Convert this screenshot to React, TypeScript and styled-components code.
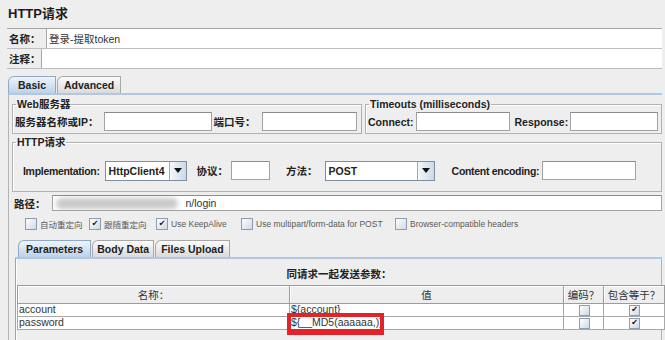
import React from 'react'
import styled, { createGlobalStyle } from 'styled-components'

const FONT = `'Liberation Sans', 'Noto Sans CJK SC', sans-serif`

const GlobalStyle = createGlobalStyle`
  body {
    margin: 0;
    background: #eeeeee;
    font-family: ${FONT};
    color: #222;
  }
`

const Page = styled.div`
  width: 665px;
  height: 340px;
  overflow: hidden;
  box-sizing: border-box;
  padding: 3px 0 0 7px;
`

const Frame = styled.div`
  width: 655px;
  display: flex;
  flex-direction: column;
`

const Title = styled.div`
  height: 22px;
  line-height: 22px;
  padding-left: 1px;
  font-size: 13px;
  font-weight: bold;
  color: #1c1c1c;
`

const NameBox = styled.div`
  margin-top: 3px;
  border-top: 1px solid #a4a4a4;
`

const FieldRow = styled.div`
  display: flex;
  height: 19px;
  border-bottom: 1px solid #bdbdbd;
`

const RowLabel = styled.div<{ $w: number }>`
  width: ${p => p.$w}px;
  flex: none;
  box-sizing: border-box;
  padding-left: 2px;
  display: flex;
  align-items: center;
  font-size: 10.5px;
  font-weight: bold;
`

const NameField = styled.div`
  flex: 1;
  background: #fff;
  border-left: 1px solid #a8a8a8;
  padding-left: 2px;
  display: flex;
  align-items: center;
  font-size: 10.5px;
  color: #333;
`

const TabStrip = styled.div<{ $ml: number; $mt: number }>`
  display: flex;
  align-items: flex-end;
  gap: 1px;
  height: 18px;
  margin: ${p => p.$mt}px 0 0 ${p => p.$ml}px;
`

const Tab = styled.div<{ $active?: boolean; $pad: number }>`
  height: 17px;
  box-sizing: border-box;
  padding: 0 ${p => p.$pad}px;
  display: flex;
  align-items: center;
  font-size: 10.5px;
  font-weight: bold;
  color: #222;
  border: 1px solid ${p => (p.$active ? '#8fa8c4' : '#a8a8a8')};
  border-bottom: none;
  border-top-left-radius: 6px;
  background: ${p =>
    p.$active ? 'linear-gradient(#eef4fa, #bcd2ea)' : 'linear-gradient(#fbfbfb, #dadada)'};
`

const TabPanel = styled.div`
  margin-left: 1px;
  border-top: 2px solid #b3c8e0;
  border-left: 1px solid #b4b4b4;
  padding-left: 3px;
  display: flex;
  flex-direction: column;
`

const GroupRow = styled.div`
  display: flex;
  gap: 3px;
  margin-top: 3px;
`

const Group = styled.fieldset<{ $w?: number; $pb: number; $mt?: number }>`
  margin: ${p => p.$mt ?? 0}px 0 0 0;
  padding: 0 3px ${p => p.$pb}px 2px;
  min-width: 0;
  box-sizing: border-box;
  border: 1px solid #b2b2b2;
  box-shadow: inset 1px 1px 0 #fff;
  ${p => (p.$w ? `width: ${p.$w}px; flex: none;` : 'flex: 1;')}
  overflow: hidden;
`

const Legend = styled.legend`
  padding: 0 1px;
  margin-left: 1px;
  line-height: 13px;
  font-size: 10.5px;
  font-weight: bold;
  color: #222;
`

const Line = styled.div<{ $h: number; $mt?: number; $pl?: number }>`
  display: flex;
  align-items: center;
  height: ${p => p.$h}px;
  margin-top: ${p => p.$mt ?? 0}px;
  padding-left: ${p => p.$pl ?? 0}px;
`

const Label = styled.span<{ $ml?: number; $mr?: number; $tight?: boolean }>`
  flex: none;
  margin-left: ${p => p.$ml ?? 0}px;
  margin-right: ${p => p.$mr ?? 1}px;
  font-size: 10.5px;
  font-weight: bold;
  color: #222;
  white-space: nowrap;
  letter-spacing: ${p => (p.$tight ? '-0.3px' : 'normal')};
`

const TextField = styled.div<{ $w?: number; $h: number }>`
  ${p => (p.$w ? `width: ${p.$w}px; flex: none;` : 'flex: 1;')}
  height: ${p => p.$h}px;
  box-sizing: border-box;
  background: #fff;
  border: 1px solid #a2a2a2;
  border-top-color: #8c8c8c;
  display: flex;
  align-items: center;
  padding-left: 3px;
  font-size: 10.5px;
  color: #333;
  white-space: nowrap;
  overflow: hidden;
`

const Combo = styled.div<{ $w: number }>`
  width: ${p => p.$w}px;
  flex: none;
  height: 20px;
  box-sizing: border-box;
  display: flex;
  border: 1px solid #7f8f9f;
  background: #fff;
`

const ComboText = styled.div`
  flex: 1;
  display: flex;
  align-items: center;
  padding-left: 3px;
  font-size: 10.5px;
  font-weight: bold;
  color: #222;
`

const ArrowButton = styled.div`
  width: 16px;
  display: flex;
  align-items: center;
  justify-content: center;
  border-left: 1px solid #9aaabb;
  background: linear-gradient(90deg, #f4f7fa, #c9d9ea);
`

const BlurBlock = styled.span`
  display: inline-block;
  width: 122px;
  height: 11px;
  margin-right: 8px;
  border-radius: 6px;
  background: #c9c9c9;
  filter: blur(2.5px);
`

const CheckRow = styled.div`
  display: flex;
  align-items: center;
  height: 13px;
  margin-top: 6px;
  padding-left: 13px;
`

const CheckItem = styled.div<{ $w?: number }>`
  display: flex;
  align-items: center;
  gap: 3px;
  flex: none;
  ${p => (p.$w ? `width: ${p.$w}px;` : '')}
`

const Box = styled.span<{ $size: number }>`
  width: ${p => p.$size}px;
  height: ${p => p.$size}px;
  box-sizing: border-box;
  flex: none;
  display: flex;
  align-items: center;
  justify-content: center;
  border: 1px solid #8d9eb2;
  background: linear-gradient(135deg, #ffffff, #cdd9e6);
  font-family: 'DejaVu Sans', sans-serif;
  font-size: 8px;
  line-height: 1;
  color: #111;
`

const CheckText = styled.span`
  font-size: 8.5px;
  color: #5a5a5a;
  white-space: nowrap;
`

const SubPanel = styled.div`
  margin-left: 3px;
  border-top: 2px solid #b3c8e0;
  border-left: 1px solid #a4a4a4;
  border-right: 1px solid #b4b4b4;
  box-shadow: inset 1px 0 0 #fff;
  padding: 0 0 12px 1px;
  display: flex;
  flex-direction: column;
`

const Caption = styled.div`
  margin-top: 8px;
  height: 14px;
  line-height: 14px;
  text-align: center;
  font-size: 10.5px;
  font-weight: bold;
  color: #222;
`

const ParamTable = styled.table`
  border-collapse: collapse;
  table-layout: fixed;
  width: 643px;
  margin-top: 4px;
  font-size: 10.5px;
`

const Th = styled.th<{ $w: number }>`
  width: ${p => p.$w}px;
  height: 17px;
  padding: 0;
  font-weight: normal;
  color: #333;
  background: #eeeeee;
  border: 1px solid #9c9c9c;
  box-shadow: inset 1px 1px 0 #fff;
`

const Td = styled.td`
  height: 12px;
  padding: 0 0 0 1px;
  background: #fff;
  border: 1px solid #a8a8a8;
  color: #333;
  vertical-align: middle;
  white-space: nowrap;
  position: relative;
  overflow: visible;
`

const Cell = styled.div<{ $center?: boolean }>`
  height: 12px;
  line-height: 11px;
  display: flex;
  align-items: flex-start;
  justify-content: ${p => (p.$center ? 'center' : 'flex-start')};
  ${p => (p.$center ? 'align-items: center;' : '')}
`

const Highlight = styled.span`
  position: absolute;
  left: -3px;
  top: -4px;
  width: 97px;
  height: 22px;
  box-sizing: border-box;
  border: solid #e52229;
  border-width: 4px 4px 6px 4px;
  pointer-events: none;
`

const Arrow = () => (
  <svg width="8" height="5" viewBox="0 0 8 5">
    <polygon points="0,0 8,0 4,5" fill="#111" />
  </svg>
)

const Check = ({ on, size = 11 }: { on?: boolean; size?: number }) => (
  <Box $size={size}>{on ? '✔' : null}</Box>
)

const options = [
  { label: '自动重定向', on: false, w: 64 },
  { label: '跟随重定向', on: true, w: 67 },
  { label: 'Use KeepAlive', on: true, w: 85 },
  { label: 'Use multipart/form-data for POST', on: false, w: 154 },
  { label: 'Browser-compatible headers', on: false },
]

const rows = [
  { name: 'account', value: '${account}', editing: false },
  { name: 'password', value: '${__MD5(aaaaaa,)}', editing: true },
]

export default function App() {
  return (
    <>
      <GlobalStyle />
      <Page>
        <Frame>
          <Title>HTTP请求</Title>
          <NameBox>
            <FieldRow>
              <RowLabel $w={39}>名称：</RowLabel>
              <NameField>登录-提取token</NameField>
            </FieldRow>
            <FieldRow>
              <RowLabel $w={34}>注释：</RowLabel>
              <NameField />
            </FieldRow>
          </NameBox>

          <TabStrip $ml={1} $mt={6}>
            <Tab $active $pad={9}>Basic</Tab>
            <Tab $pad={6}>Advanced</Tab>
          </TabStrip>
          <TabPanel>
            <GroupRow>
              <Group $w={350} $pb={1}>
                <Legend>Web服务器</Legend>
                <Line $h={21}>
                  <Label $mr={6}>服务器名称或IP：</Label>
                  <TextField $w={108} $h={19} />
                  <Label $ml={1} $mr={7}>端口号：</Label>
                  <TextField $w={95} $h={19} />
                </Line>
              </Group>
              <Group $pb={1}>
                <Legend>Timeouts (milliseconds)</Legend>
                <Line $h={21}>
                  <Label $mr={2}>Connect:</Label>
                  <TextField $w={94} $h={19} />
                  <Label $ml={5} $mr={2}>Response:</Label>
                  <TextField $h={19} />
                </Line>
              </Group>
            </GroupRow>

            <Group $pb={10} $mt={2}>
              <Legend>HTTP请求</Legend>
              <Line $h={21} $mt={11} $pl={8}>
                <Label $mr={5} $tight>Implementation:</Label>
                <Combo $w={82}>
                  <ComboText>HttpClient4</ComboText>
                  <ArrowButton>
                    <Arrow />
                  </ArrowButton>
                </Combo>
                <Label $ml={10} $mr={3}>协议：</Label>
                <TextField $w={39} $h={19} />
                <Label $ml={16} $mr={7}>方法：</Label>
                <Combo $w={110}>
                  <ComboText>POST</ComboText>
                  <ArrowButton>
                    <Arrow />
                  </ArrowButton>
                </Combo>
                <Label $ml={17} $mr={3} $tight>Content encoding:</Label>
                <TextField $w={94} $h={19} />
              </Line>
            </Group>

            <Line $h={16} $mt={3} $pl={2}>
              <Label $mr={6}>路径：</Label>
              <TextField $h={16}>
                <BlurBlock />
                n/login
              </TextField>
            </Line>

            <CheckRow>
              {options.map(o => (
                <CheckItem key={o.label} $w={o.w}>
                  <Check on={o.on} size={12} />
                  <CheckText>{o.label}</CheckText>
                </CheckItem>
              ))}
            </CheckRow>

            <TabStrip $ml={6} $mt={9}>
              <Tab $active $pad={7}>Parameters</Tab>
              <Tab $pad={4}>Body Data</Tab>
              <Tab $pad={5}>Files Upload</Tab>
            </TabStrip>
            <SubPanel>
              <Caption>同请求一起发送参数：</Caption>
              <ParamTable>
                <thead>
                  <tr>
                    <Th $w={271}>名称：</Th>
                    <Th $w={273}>值</Th>
                    <Th $w={39}>编码？</Th>
                    <Th $w={60}>包含等于？</Th>
                  </tr>
                </thead>
                <tbody>
                  {rows.map(r => (
                    <tr key={r.name}>
                      <Td>
                        <Cell>{r.name}</Cell>
                      </Td>
                      <Td>
                        <Cell>{r.value}</Cell>
                        {r.editing && <Highlight />}
                      </Td>
                      <Td>
                        <Cell $center>
                          <Check />
                        </Cell>
                      </Td>
                      <Td>
                        <Cell $center>
                          <Check on />
                        </Cell>
                      </Td>
                    </tr>
                  ))}
                </tbody>
              </ParamTable>
            </SubPanel>
          </TabPanel>
        </Frame>
      </Page>
    </>
  )
}
